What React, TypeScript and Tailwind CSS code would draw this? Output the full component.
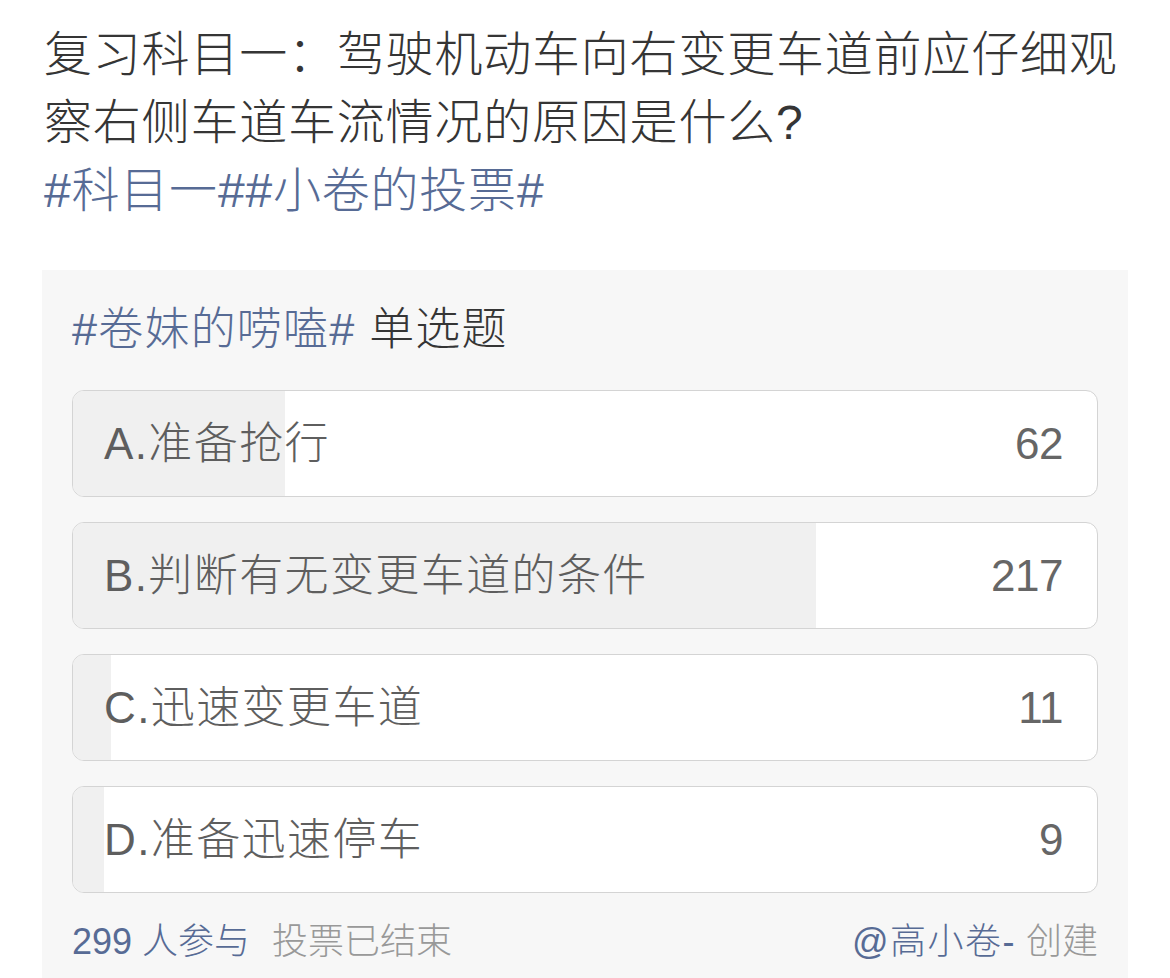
const font = '[font-family:"Liberation_Sans","Noto_Sans_CJK_SC",sans-serif]';

type Option = { label: string; votes: number };

const options: Option[] = [
  { label: 'A.准备抢行', votes: 62 },
  { label: 'B.判断有无变更车道的条件', votes: 217 },
  { label: 'C.迅速变更车道', votes: 11 },
  { label: 'D.准备迅速停车', votes: 9 },
];

const total = 299;

function OptionRow({ option }: { option: Option }) {
  const pct = (option.votes / total) * 100;
  return (
    <div className="relative h-[107px] overflow-hidden rounded-[12px] border border-[#d4d4d4] bg-white">
      <div className="absolute inset-y-0 left-0 bg-[#f0f0f0]" style={{ width: `${pct}%` }} />
      <div className="relative flex h-full items-center justify-between pl-[31px] pr-[34px]">
        <span className="text-[44px] tracking-[1.4px] text-[#5e5e5e]">{option.label}</span>
        <span className="text-[44px] tracking-[-0.5px] text-[#666]">{option.votes}</span>
      </div>
    </div>
  );
}

export default function App() {
  return (
    <div className={`min-h-screen bg-white font-light ${font}`}>
      <div className="pl-[44px] pr-[40px] pt-[21px]">
        <p className="text-[48px] leading-[68px] tracking-[0.8px] text-[#353535]">
          复习科目一：驾驶机动车向右变更车道前应仔细观察右侧车道车流情况的原因是什么?
          <br />
          <span className="text-[#576b95]">#科目一##小卷的投票#</span>
        </p>
      </div>

      <div className="ml-[42px] mr-[42px] mt-[45px] bg-[#f7f7f7] px-[30px] pb-[40px] pt-[30px]">
        <div className="text-[45px] leading-[60px] tracking-[1.2px] text-[#353535]">
          <span className="text-[#576b95]">#卷妹的唠嗑#</span> 单选题
        </div>

        <div className="mt-[30px] flex flex-col gap-[25px]">
          {options.map((o) => (
            <OptionRow key={o.label} option={o} />
          ))}
        </div>

        <div className="mt-[24px] flex items-center justify-between text-[36px] leading-[50px]">
          <div>
            <span className="text-[#576b95]">299 人参与</span>
            <span className="ml-[22px] text-[#999]">投票已结束</span>
          </div>
          <div>
            <span className="tracking-[1.5px] text-[#576b95]">@高小卷-</span>
            <span className="ml-[10px] text-[#999]">创建</span>
          </div>
        </div>
      </div>
    </div>
  );
}
